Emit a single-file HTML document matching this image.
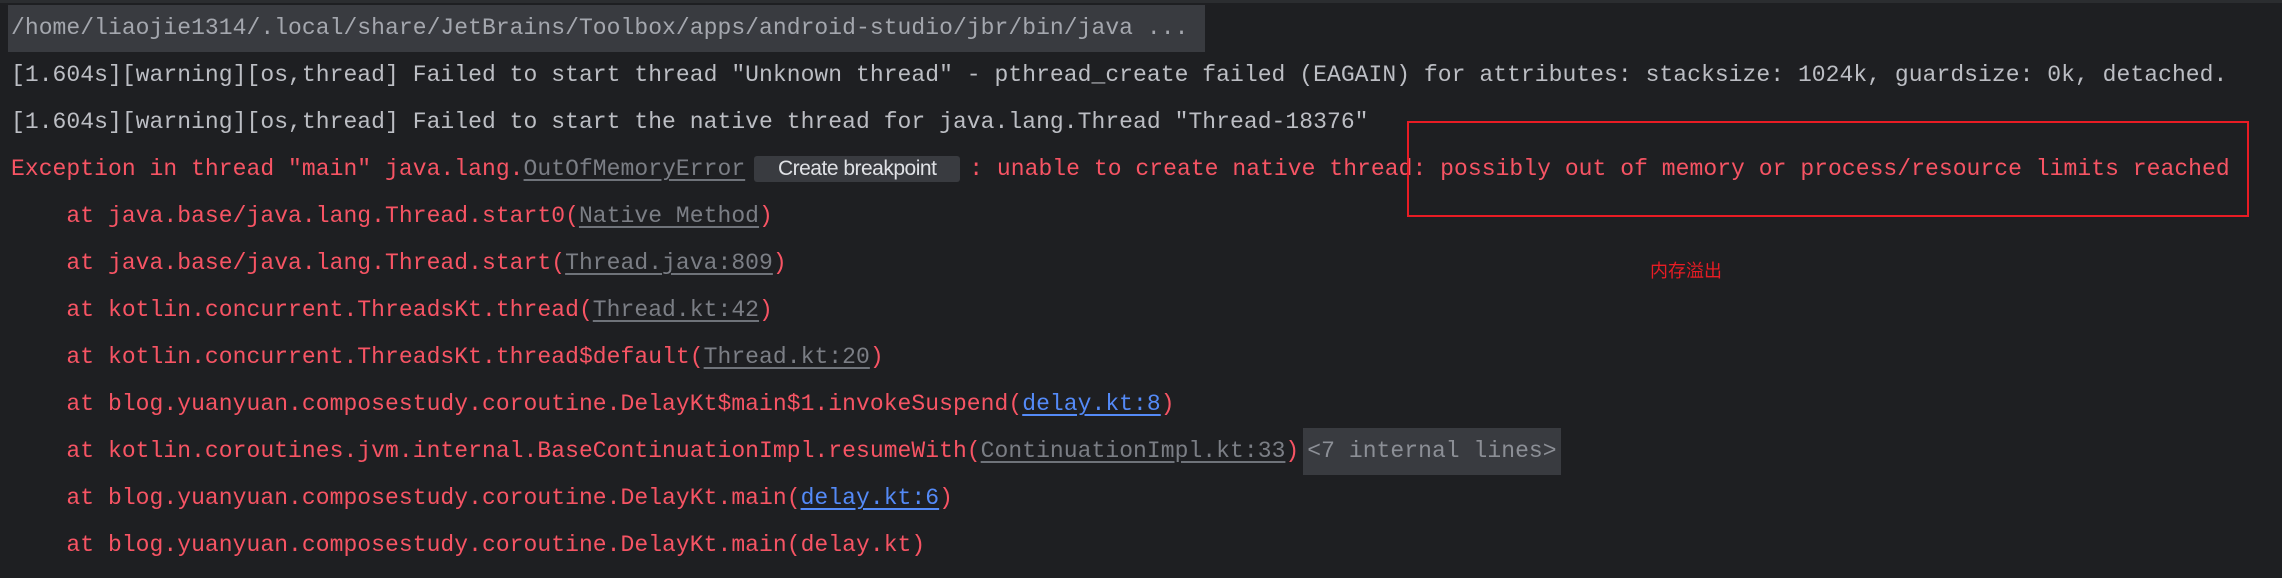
<!DOCTYPE html>
<html><head><meta charset="utf-8"><style>
html,body{margin:0;padding:0;background:#1e1f22;width:2282px;height:578px;overflow:hidden;position:relative}
.l{position:absolute;left:11px;height:47px;line-height:47px;white-space:pre;font-family:"Liberation Mono",monospace;font-size:23px;letter-spacing:0.05px;color:#bcbec4}
.r{color:#f75464}
.g{color:#7b7e85;text-decoration:underline;text-decoration-color:#6f737a;text-underline-offset:4px}
.b{color:#548af7;text-decoration:underline;text-underline-offset:4px}
.hd{position:absolute;left:8px;top:5px;width:1197px;height:47px;background:#393b40}
.bp{display:inline-block;width:206px;height:26px;line-height:26px;margin-left:9px;margin-right:9px;background:#393b40;border-radius:3px;color:#dfe1e5;font-family:"Liberation Sans",sans-serif;font-size:21px;letter-spacing:-0.5px;text-align:center;vertical-align:middle}
.il{display:inline-block;background:#393b40;color:#8c8f96;padding:0 4px;margin-left:4px;height:47px}
.box{position:absolute;left:1407px;top:121px;width:838px;height:92px;border:2px solid #e81c24}
.cn{position:absolute;left:1650px;top:258px;font-family:"Noto Sans CJK SC",sans-serif;font-size:18px;color:#e81c24;line-height:24px}
.top{position:absolute;left:0;top:0;width:2282px;height:3px;background:#2b2d30}
</style></head><body>
<div class="top"></div>
<div class="hd"></div>
<div class="l" style="top:5px;color:#a4a7ae">/home/liaojie1314/.local/share/JetBrains/Toolbox/apps/android-studio/jbr/bin/java ...</div>
<div class="l" style="top:52px">[1.604s][warning][os,thread] Failed to start thread "Unknown thread" - pthread_create failed (EAGAIN) for attributes: stacksize: 1024k, guardsize: 0k, detached.</div>
<div class="l" style="top:99px">[1.604s][warning][os,thread] Failed to start the native thread for java.lang.Thread "Thread-18376"</div>
<div class="l r" style="top:146px">Exception in thread "main" java.lang.<span class="g">OutOfMemoryError</span><span class="bp">Create breakpoint</span>: unable to create native thread: possibly out of memory or process/resource limits reached</div>
<div class="l r" style="top:193px">    at java.base/java.lang.Thread.start0(<span class="g">Native Method</span>)</div>
<div class="l r" style="top:240px">    at java.base/java.lang.Thread.start(<span class="g">Thread.java:809</span>)</div>
<div class="l r" style="top:287px">    at kotlin.concurrent.ThreadsKt.thread(<span class="g">Thread.kt:42</span>)</div>
<div class="l r" style="top:334px">    at kotlin.concurrent.ThreadsKt.thread$default(<span class="g">Thread.kt:20</span>)</div>
<div class="l r" style="top:381px">    at blog.yuanyuan.composestudy.coroutine.DelayKt$main$1.invokeSuspend(<span class="b">delay.kt:8</span>)</div>
<div class="l r" style="top:428px">    at kotlin.coroutines.jvm.internal.BaseContinuationImpl.resumeWith(<span class="g">ContinuationImpl.kt:33</span>)<span class="il">&lt;7 internal lines&gt;</span></div>
<div class="l r" style="top:475px">    at blog.yuanyuan.composestudy.coroutine.DelayKt.main(<span class="b">delay.kt:6</span>)</div>
<div class="l r" style="top:522px">    at blog.yuanyuan.composestudy.coroutine.DelayKt.main(delay.kt)</div>
<div class="box"></div>
<div class="cn">内存溢出</div>
</body></html>
